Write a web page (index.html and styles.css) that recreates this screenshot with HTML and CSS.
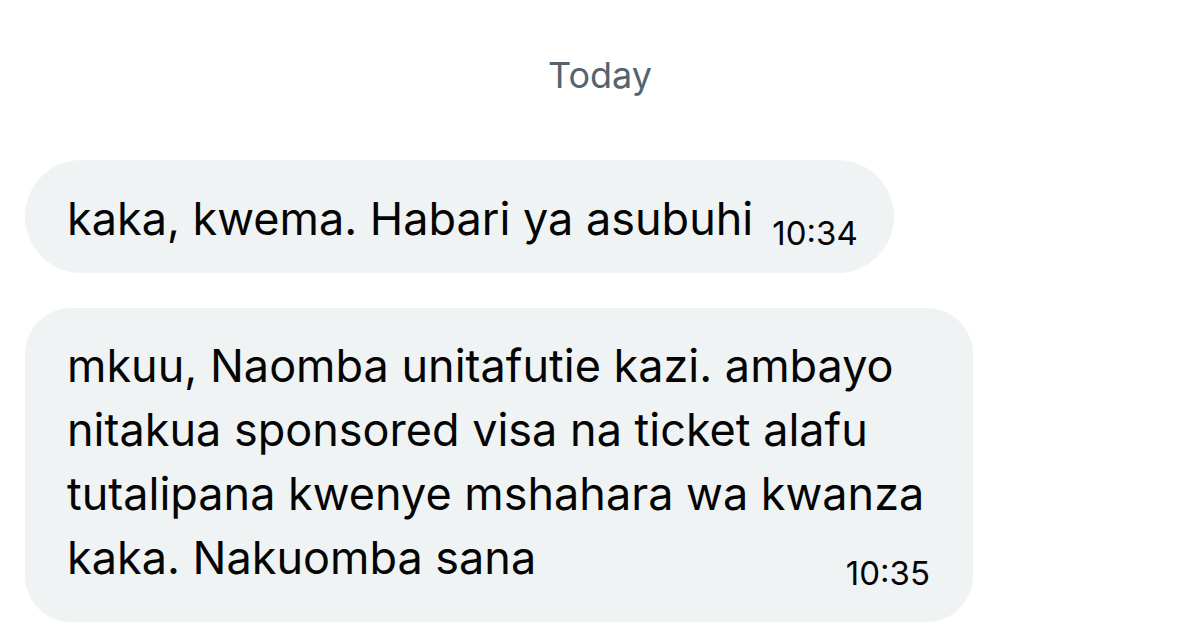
FILE: index.html
```html
<!DOCTYPE html>
<html lang="sw">
<head>
<meta charset="utf-8">
<title>Messages</title>
<link rel="stylesheet" href="styles.css">
</head>
<body>
<main class="chat">
  <div class="day">Today</div>
  <div class="bubble bubble-short">
    <span class="text">kaka, kwema. Habari ya asubuhi</span>
    <span class="time">10:34</span>
  </div>
  <div class="bubble bubble-long">
    <p class="text">mkuu, Naomba unitafutie kazi. ambayo<br>nitakua sponsored visa na ticket alafu<br>tutalipana kwenye mshahara wa kwanza<br>kaka. Nakuomba sana</p>
    <span class="time">10:35</span>
  </div>
</main>
</body>
</html>
```
FILE: styles.css
```css
* { box-sizing: border-box; }
html, body {
  margin: 0;
  padding: 0;
  background: #ffffff;
}
body {
  font-family: Inter, "Liberation Sans", Arial, sans-serif;
  color: #050505;
  width: 1200px;
  height: 641px;
  overflow: hidden;
}
.chat {
  display: flex;
  flex-direction: column;
  align-items: flex-start;
  padding: 52px 0 0 25px;
}
.day {
  align-self: center;
  margin-left: -25px;
  font-size: 36px;
  line-height: 46px;
  color: #536471;
  height: 108px;
}
.bubble {
  background: #eff3f4;
}
.bubble-short {
  display: flex;
  align-items: flex-end;
  border-radius: 57px;
  padding: 27px 36px 23px 42px;
}
.text {
  font-size: 45px;
  line-height: 63px;
  white-space: nowrap;
  margin: 0;
}
.time {
  font-size: 33px;
  line-height: 33px;
}
.bubble-short .time {
  margin-left: 19px;
}
.bubble-long {
  margin-top: 35px;
  width: 948px;
  border-radius: 46px;
  padding: 26px 43px 32px 42px;
  display: grid;
}
.bubble-long .text,
.bubble-long .time {
  grid-area: 1 / 1;
}
.bubble-long .text {
  line-height: 64px;
}
.bubble-long .time {
  align-self: end;
  justify-self: end;
}
```
